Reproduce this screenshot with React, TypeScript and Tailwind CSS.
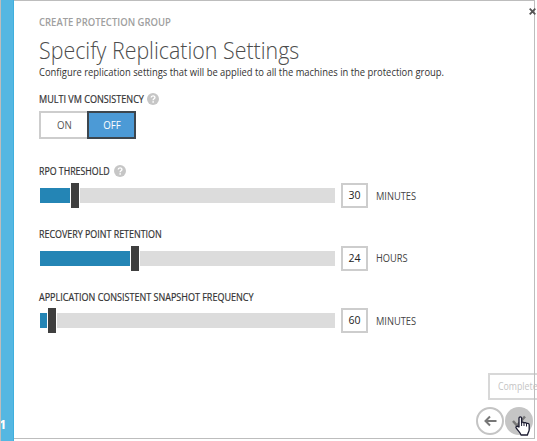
import React from "react";

function HelpIcon() {
  return (
    <svg className="h-[12px] w-[12px] shrink-0" viewBox="0 0 12 12">
      <circle cx="6" cy="6" r="6" fill="#c6c6c6" />
      <path d="M4.2 4.6C4.2 2.3 7.9 2.3 7.9 4.4C7.9 5.7 6.1 5.7 6.1 7.2" fill="none" stroke="#fff" strokeWidth="1.4" />
      <rect x="5.4" y="8.2" width="1.5" height="1.5" fill="#fff" />
    </svg>
  );
}

type SliderProps = {
  label: string;
  labelClass: string;
  help?: boolean;
  fill: number;
  value: string;
  unit: string;
};

function SliderRow({ label, labelClass, help, fill, value, unit }: SliderProps) {
  return (
    <div className="flex h-[62.5px] flex-col">
      <div className="flex h-[18px] items-center text-[10px] [-webkit-text-stroke:0.2px_#333]">
        <span className={`inline-block origin-left whitespace-nowrap ${labelClass}`}>{label}</span>
        {help && <HelpIcon />}
      </div>
      <div className="mt-[3px] flex h-[25px] items-center">
        <div className="flex h-[25px] w-[296px] items-center pl-px">
          <div className="h-[15px] bg-[#2485b5]" style={{ width: fill }} />
          <div className="mx-px h-[25px] w-[8px] shrink-0 bg-[#3f3f3f]" />
          <div className="h-[15px] flex-1 bg-[#dcdcdc]" />
        </div>
        <div className="ml-[6px] flex h-[25px] w-[27px] items-center justify-center border-2 border-[#cdcdcd] pt-px text-[10.5px] text-[#222]">
          {value}
        </div>
        <span className="ml-[8px] inline-block origin-left scale-x-[0.885] pt-[2px] text-[10.5px] text-[#444]">{unit}</span>
      </div>
    </div>
  );
}

export default function App() {
  return (
    <div className="relative h-[441px] w-[537px] overflow-hidden bg-white font-['Open_Sans','Noto_Sans',sans-serif] text-[#333]">
      <div className="flex h-full">
        <aside className="flex w-[14px] shrink-0 flex-col justify-end overflow-hidden border-r border-l border-r-[#3fafde] border-l-[#bdbdbd] bg-[#55b7e2] pb-[9px]">
          <span className="-ml-[2px] text-[13px] leading-[15px] font-bold text-white">1</span>
        </aside>
        <div className="h-[439px] w-[521px] border-t border-r border-b border-[#bdbdbd] pl-[25px]">
          <div className="mt-[12px] h-[18px] text-[10px] leading-[18px] font-semibold whitespace-nowrap text-[#a0a0a0]">
            <span className="inline-block origin-left scale-x-[0.95]">CREATE PROTECTION GROUP</span>
          </div>
          <h1 className="mt-[4px] h-[29px] text-[24px] leading-[29px] font-light whitespace-nowrap text-[#4c4c4c]">
            <span className="inline-block origin-left scale-x-[0.891]">Specify Replication Settings</span>
          </h1>
          <p className="h-[16px] text-[10px] leading-[17px] whitespace-nowrap">
            <span className="inline-block origin-left scale-x-[0.939]">Configure replication settings that will be applied to all the machines in the protection group.</span>
          </p>
          <div className="mt-[10px] flex h-[18px] items-center text-[10px] [-webkit-text-stroke:0.2px_#333]">
            <span className="inline-block w-[108px] origin-left scale-x-[0.906] whitespace-nowrap">MULTI VM CONSISTENCY</span>
            <HelpIcon />
          </div>
          <div className="mt-[3px] flex h-[28px] w-[97px] text-[11px]">
            <div className="flex w-[48px] items-center justify-center border-2 border-r-0 border-[#cdcdcd] pt-px text-[#555]">
              <span className="scale-x-[0.88]">ON</span>
            </div>
            <div className="flex w-[49px] items-center justify-center border-2 border-[#3d464e] bg-[#4c9ad6] pt-px text-white">
              <span className="scale-x-[0.88]">OFF</span>
            </div>
          </div>
          <div className="mt-[23px]">
            <SliderRow label="RPO THRESHOLD" labelClass="w-[75px] scale-x-[0.88]" help fill={30} value="30" unit="MINUTES" />
            <SliderRow label="RECOVERY POINT RETENTION" labelClass="scale-x-[0.89] pt-[2px]" fill={90} value="24" unit="HOURS" />
            <SliderRow label="APPLICATION CONSISTENT SNAPSHOT FREQUENCY" labelClass="scale-x-[0.9] pt-[2px]" fill={7} value="60" unit="MINUTES" />
          </div>
          <div className="mt-[57px] ml-[437px] flex gap-px">
            <svg className="h-[28px] w-[28px] shrink-0" viewBox="0 0 28 28">
              <circle cx="14" cy="14" r="13" fill="#fff" stroke="#c4c4c4" strokeWidth="2" />
              <path d="M20.5 14H10M14 9.5L9.5 14L14 18.5" fill="none" stroke="#777" strokeWidth="2" />
            </svg>
            <svg className="h-[28px] w-[28px] shrink-0" viewBox="0 0 28 28">
              <circle cx="14" cy="14" r="14" fill="#c5c5c5" />
              <path d="M8 14L12 18.5L20 9.5" fill="none" stroke="#777" strokeWidth="2.5" />
            </svg>
          </div>
        </div>
      </div>
      <svg className="absolute top-[8px] left-[529px] h-[7px] w-[7px]" viewBox="0 0 7 7">
        <path d="M0.7 0.7L6.3 6.3M6.3 0.7L0.7 6.3" stroke="#555" strokeWidth="1.8" />
      </svg>
      <div className="absolute top-[373px] left-[488px] flex h-[27px] w-[60px] items-center border-2 border-[#d8d8d8] bg-white pl-[8px] text-[11px] text-[#c4c4c4]">
        <span className="inline-block origin-left scale-x-[0.8]">Complete</span>
      </div>
      <div className="absolute top-[373px] left-[534px] h-[27px] w-px bg-[#bdbdbd]" />
      <svg className="absolute top-[416px] left-[515px] h-[20px] w-[16px]" viewBox="0 0 16 20">
        <path
          d="M4 11V2.2C4 .5 6.6.5 6.6 2.2V7C6.6 5.8 9 5.8 9 7.2C9.2 6.2 11.5 6.3 11.5 7.8C11.8 7 14.2 7.2 14.2 8.8V13.5C14.2 16 12.8 16.5 12.5 19H6C5.7 17 3.5 15.5 1.3 12.2C.4 10.7 1.7 9.4 4 11Z"
          fill="#fff"
          stroke="#1b1b30"
          strokeWidth="1.3"
          strokeLinejoin="round"
        />
        <path d="M6.6 7V10M9 7.5V10M11.5 8V10.5" stroke="#1b1b30" strokeWidth="1" />
      </svg>
    </div>
  );
}
